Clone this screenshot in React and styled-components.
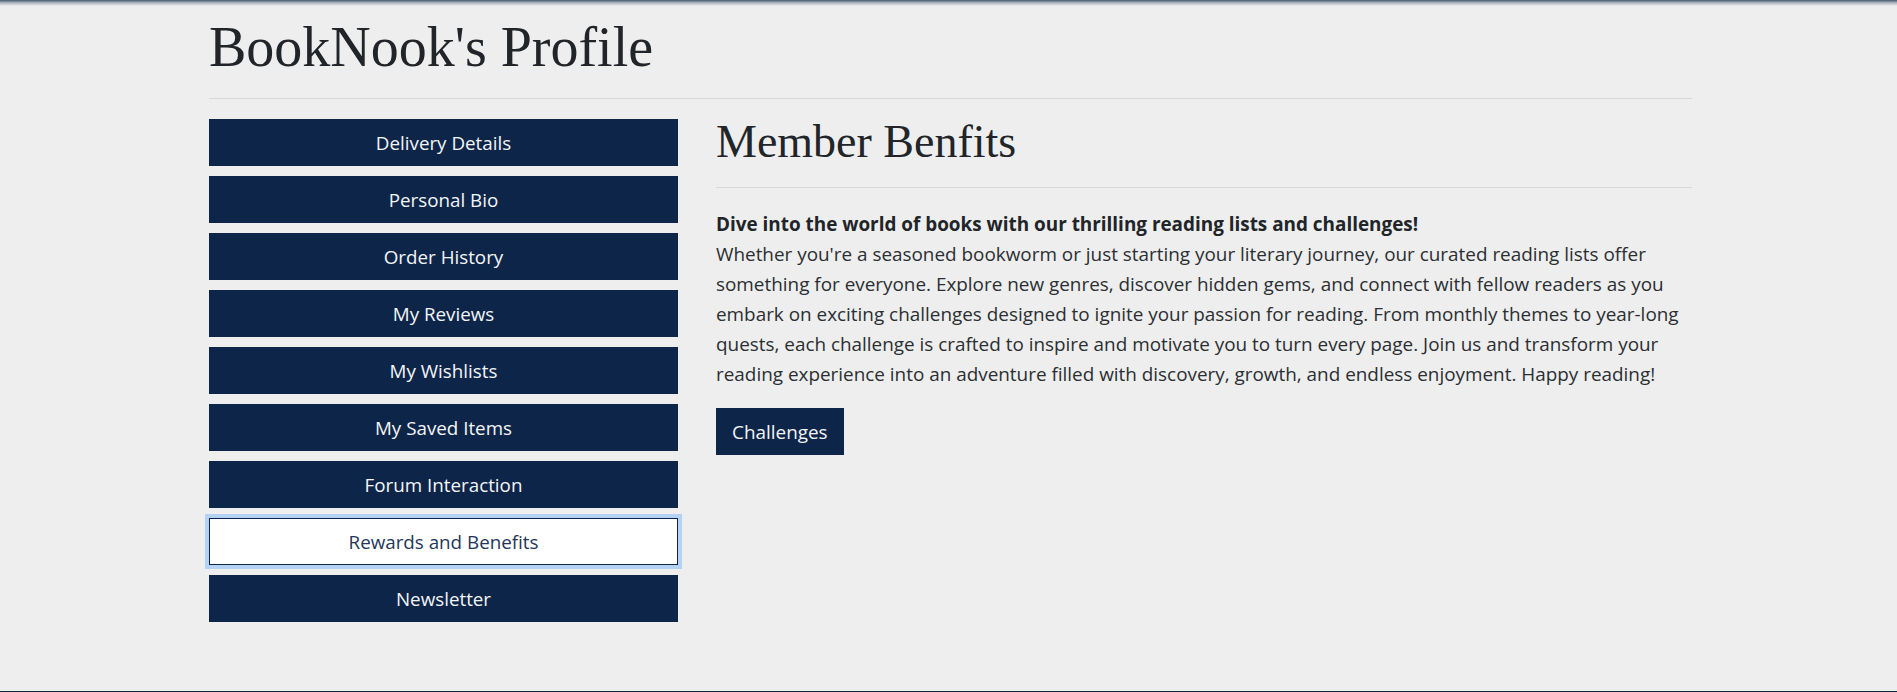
import React, { useState } from 'react';
import styled, { createGlobalStyle } from 'styled-components';

const GlobalStyle = createGlobalStyle`
  html, body {
    margin: 0;
    padding: 0;
    background: #eeeeee;
  }
  body {
    font-family: 'Open Sans', 'Noto Sans', sans-serif;
    color: #212529;
  }
`;

const TopShade = styled.div`
  height: 6px;
  background: linear-gradient(rgba(60, 78, 104, 0.95), rgba(90, 106, 128, 0.45) 45%, rgba(120, 130, 145, 0));
`;

const Container = styled.div`
  width: 1483px;
  margin: 0 0 0 209px;
`;

const PageTitle = styled.h1`
  margin: 8px 0 0;
  font-family: 'Liberation Serif', 'DejaVu Serif', serif;
  font-weight: 400;
  font-size: 56px;
  line-height: 66px;
  color: #212529;
`;

const Rule = styled.hr`
  margin: ${(p) => p.$top || 0}px 0 0;
  border: none;
  border-top: 1px solid #d8d8d8;
  height: 0;
`;

const Layout = styled.div`
  display: grid;
  grid-template-columns: 469px 1fr;
  column-gap: 38px;
  margin-top: 20px;
`;

const Menu = styled.nav`
  display: flex;
  flex-direction: column;
  gap: 10px;
`;

const MenuButton = styled.button`
  height: 47px;
  display: flex;
  align-items: center;
  justify-content: center;
  font-family: 'Open Sans', 'Noto Sans', sans-serif;
  font-size: 18.8px;
  border: 1px solid #0c2549;
  border-radius: 0;
  cursor: pointer;
  background: ${(p) => (p.$active ? '#ffffff' : '#0c2549')};
  color: ${(p) => (p.$active ? '#1f365a' : '#f4f5f7')};
  box-shadow: ${(p) => (p.$active ? '0 0 0 4px #b4d2f3' : 'none')};
  outline: none;
`;

const Content = styled.section``;

const SectionTitle = styled.h2`
  margin: 0;
  font-family: 'Liberation Serif', 'DejaVu Serif', serif;
  font-weight: 400;
  font-size: 46px;
  line-height: 46px;
  color: #212529;
`;

const Text = styled.p`
  margin: 21px 0 0;
  font-size: 18.9px;
  line-height: 30px;
  color: #2b2f33;
`;

const Lead = styled.strong`
  display: block;
  font-weight: 700;
  color: #212529;
`;

const ActionButton = styled.button`
  margin-top: 19px;
  height: 47px;
  padding: 0 16px;
  font-family: 'Open Sans', 'Noto Sans', sans-serif;
  font-size: 18.9px;
  background: #0c2549;
  color: #f4f5f7;
  border: none;
  border-radius: 0;
  cursor: pointer;
`;

const Footer = styled.footer`
  margin-top: 69px;
  height: 60px;
  background: #0c2549;
`;

const menuItems = [
  'Delivery Details',
  'Personal Bio',
  'Order History',
  'My Reviews',
  'My Wishlists',
  'My Saved Items',
  'Forum Interaction',
  'Rewards and Benefits',
  'Newsletter',
];

export default function App() {
  const [active, setActive] = useState('Rewards and Benefits');

  return (
    <>
      <GlobalStyle />
      <TopShade />
      <Container>
        <PageTitle>BookNook's Profile</PageTitle>
        <Rule $top={18} />
        <Layout>
          <Menu>
            {menuItems.map((item) => (
              <MenuButton
                key={item}
                $active={item === active}
                onClick={() => setActive(item)}
              >
                {item}
              </MenuButton>
            ))}
          </Menu>
          <Content>
            <SectionTitle>Member Benfits</SectionTitle>
            <Rule $top={22} />
            <Text>
              <Lead>Dive into the world of books with our thrilling reading lists and challenges!</Lead>
              Whether you're a seasoned bookworm or just starting your literary journey, our curated
              reading lists offer something for everyone. Explore new genres, discover hidden gems, and
              connect with fellow readers as you embark on exciting challenges designed to ignite your
              passion for reading. From monthly themes to year-long quests, each challenge is crafted to
              inspire and motivate you to turn every page. Join us and transform your reading experience
              into an adventure filled with discovery, growth, and endless enjoyment. Happy reading!
            </Text>
            <ActionButton>Challenges</ActionButton>
          </Content>
        </Layout>
      </Container>
      <Footer />
    </>
  );
}
